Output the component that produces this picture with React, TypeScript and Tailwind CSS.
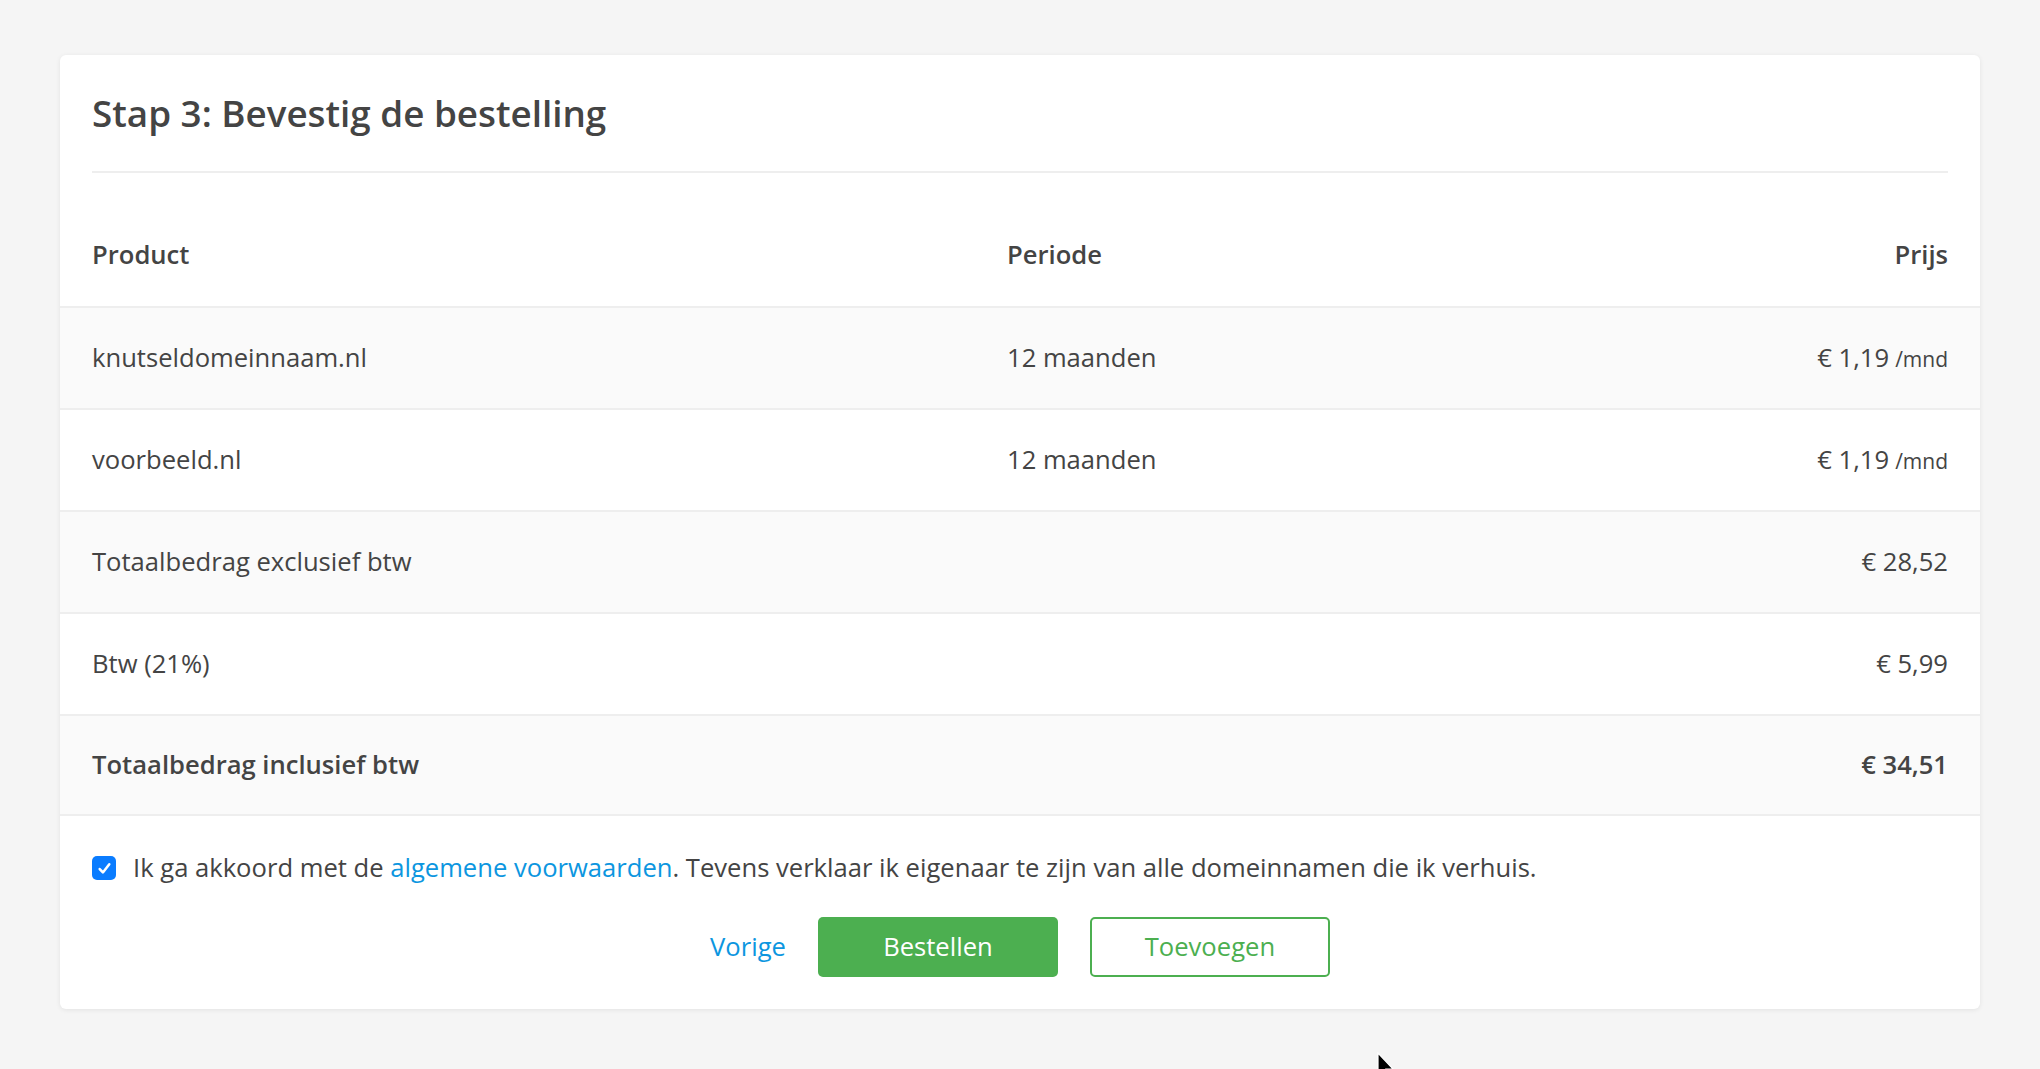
import React from "react";

type Row = {
  label: string;
  period?: string;
  price: string;
  perMonth?: boolean;
  bold?: boolean;
};

const ROWS: Row[] = [
  { label: "knutseldomeinnaam.nl", period: "12 maanden", price: "€ 1,19", perMonth: true },
  { label: "voorbeeld.nl", period: "12 maanden", price: "€ 1,19", perMonth: true },
  { label: "Totaalbedrag exclusief btw", price: "€ 28,52" },
  { label: "Btw (21%)", price: "€ 5,99" },
  { label: "Totaalbedrag inclusief btw", price: "€ 34,51", bold: true },
];

export default function App() {
  return (
    <div
      className="relative min-h-screen bg-[#f5f5f5] px-[60px] pt-[55px] text-[#444]"
      style={{ fontFamily: '"Open Sans", "Noto Sans", sans-serif' }}
    >
      <div className="rounded-[6px] bg-white shadow-[0_1px_5px_rgba(0,0,0,0.08)]">
        {/* Title */}
        <div className="px-8 pt-[35px]">
          <h1 className="border-b-2 border-[#eeeeee] pb-[35px] text-[36.8px] font-semibold leading-[46px]">
            Stap 3: Bevestig de bestelling
          </h1>
        </div>

        {/* Table */}
        <div className="mt-[31px] text-[25.6px]">
          <div className="grid h-[102px] grid-cols-[915px_1fr_auto] items-center px-8 font-semibold">
            <span>Product</span>
            <span>Periode</span>
            <span className="text-right">Prijs</span>
          </div>
          {ROWS.map((row, idx) => (
            <div
              key={row.label}
              className={
                "grid h-[102px] grid-cols-[915px_1fr_auto] items-center border-t-2 border-[#eeeeee] px-8 " +
                (idx % 2 === 0 ? "bg-[#fafafa] " : "bg-white ") +
                (idx === ROWS.length - 1 ? "border-b-2 font-semibold" : "")
              }
            >
              <span>{row.label}</span>
              <span>{row.period}</span>
              <span className="text-right">
                {row.price}
                {row.perMonth && <span className="ml-[6px] text-[21px]">/mnd</span>}
              </span>
            </div>
          ))}
        </div>

        {/* Terms + actions */}
        <div className="px-8 pb-[32px] pt-[34px]">
          <label className="flex items-center gap-[17px] text-[25.6px] leading-[36px]">
            <span className="flex h-[24px] w-[24px] shrink-0 items-center justify-center rounded-[5px] bg-[#0a7cff]">
              <svg viewBox="0 0 16 16" className="h-[17px] w-[17px]" fill="none">
                <path
                  d="M3.5 8.5l3 3.2L12.5 4"
                  stroke="white"
                  strokeWidth="2.4"
                  strokeLinecap="round"
                  strokeLinejoin="round"
                />
              </svg>
            </span>
            <span>
              Ik ga akkoord met de{" "}
              <a className="text-[#0c96e0]">algemene voorwaarden</a>. Tevens verklaar ik
              eigenaar te zijn van alle domeinnamen die ik verhuis.
            </span>
          </label>

          <div className="mt-[31px] flex items-center justify-center gap-8 text-[25.6px]">
            <a className="text-[#0c96e0]">Vorige</a>
            <button className="h-[60px] w-[240px] rounded-[5px] bg-[#4caf50] text-white">
              Bestellen
            </button>
            <button className="h-[60px] w-[240px] rounded-[5px] border-2 border-[#4caf50] bg-white text-[#4caf50]">
              Toevoegen
            </button>
          </div>
        </div>
      </div>

      {/* mouse pointer */}
      <svg
        className="absolute left-[1377px] top-[1052px] h-[26px] w-[18px]"
        viewBox="0 0 18 26"
      >
        <path d="M1 1v22l5-5 4 8 3-1.5-4-7.5h7z" fill="black" stroke="white" strokeWidth="1.2" />
      </svg>
    </div>
  );
}
